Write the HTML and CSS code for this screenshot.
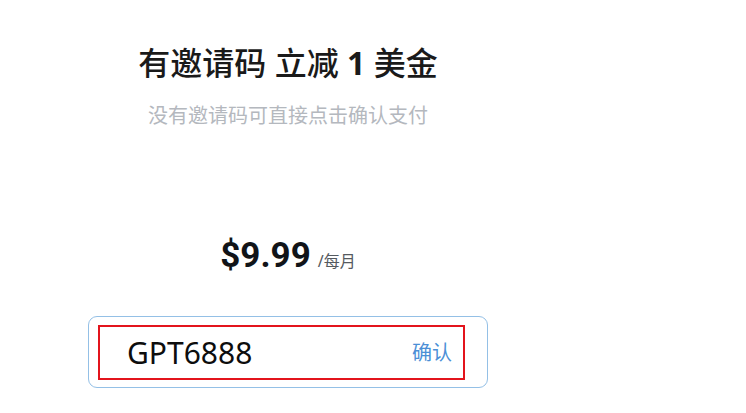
FILE: index.html
```html
<!DOCTYPE html>
<html lang="zh-CN">
<head>
<meta charset="utf-8">
<title>邀请码</title>
<link rel="stylesheet" href="styles.css">
</head>
<body>
<main class="panel">
  <h1 class="title">有邀请码 立减 <span class="num">1</span> 美金</h1>
  <p class="subtitle">没有邀请码可直接点击确认支付</p>
  <div class="price">
    <span class="amount">$9.99</span>
    <span class="period">/每月</span>
  </div>
  <div class="code-box">
    <div class="code-mark">
      <span class="code">GPT6888</span>
      <span class="confirm">确认</span>
    </div>
  </div>
</main>
</body>
</html>
```

FILE: styles.css
```css
html, body {
  margin: 0;
  padding: 0;
  background: #ffffff;
}

body {
  font-family: "Noto Sans", "Noto Sans CJK SC", sans-serif;
  width: 746px;
  height: 413px;
  overflow: hidden;
}

.panel {
  width: 576px;
  display: flex;
  flex-direction: column;
  align-items: center;
  padding-top: 44px;
}

.title {
  margin: 0;
  font-size: 32px;
  line-height: 38px;
  font-weight: 500;
  color: #1a1a1a;
  white-space: nowrap;
}

.num {
  font-weight: 700;
}

.subtitle {
  margin: 22px 0 0;
  font-size: 20px;
  line-height: 24px;
  color: #b4b8be;
  white-space: nowrap;
}

.price {
  margin-top: 109px;
  display: flex;
  align-items: baseline;
  gap: 7px;
  line-height: 38px;
}

.amount {
  font-family: Roboto, "Noto Sans", sans-serif;
  font-weight: 700;
  font-size: 35px;
  color: #111418;
}

.period {
  font-size: 16px;
  color: #555a60;
}

.code-box {
  margin-top: 36px;
  box-sizing: border-box;
  width: 400px;
  height: 72px;
  border: 1px solid #94c0e6;
  border-radius: 9px;
  padding: 8px 22px 7px 9px;
}

.code-mark {
  box-sizing: border-box;
  height: 100%;
  border: 2px solid #e3141c;
  display: flex;
  align-items: center;
  justify-content: space-between;
  padding: 0 11px 0 27px;
}

.code {
  font-size: 30px;
  color: #0d0d0d;
  line-height: 1;
}

.confirm {
  font-size: 20px;
  color: #4b8fd6;
  line-height: 1;
}
```
